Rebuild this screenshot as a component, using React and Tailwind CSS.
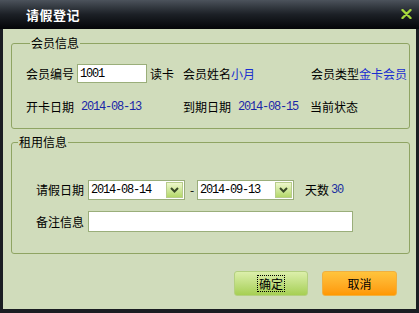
import React from 'react';

const cjk = { fontFamily: '"Noto Sans CJK SC", "Noto Sans", sans-serif' };

function DateCombo({ value }) {
  return (
    <div className="flex h-[20px] w-[97px] items-center border border-[#9aae7a] bg-white">
      <span className="flex-1 pl-[2px] font-['Liberation_Mono',monospace] text-[12px] tracking-[-1.2px] text-black">
        {value}
      </span>
      <span className="mr-[1px] flex h-[16px] w-[17px] items-center justify-center border border-[#b8cc8c] bg-gradient-to-b from-[#eef8cc] to-[#b4d868]">
        <svg width="9" height="6" viewBox="0 0 9 6">
          <path d="M1 1 L4.5 4.5 L8 1" stroke="#3a4a28" strokeWidth="2" fill="none" />
        </svg>
      </span>
    </div>
  );
}

export default function App() {
  return (
    <div className="flex h-[313px] w-[419px] flex-col bg-[#1a1d22] text-[12px] leading-[14px] text-black" style={cjk}>
      {/* title bar */}
      <div className="flex h-[29px] items-center justify-between bg-gradient-to-b from-[#4c535c] via-[#1c2026] to-[#050608] pl-[26px] pr-[7px]">
        <span className="text-[13px] font-bold tracking-[0.5px] text-white">请假登记</span>
        <svg width="11" height="10" viewBox="0 0 11 10" className="mb-[2px]">
          <path d="M1.5 1 L9.5 9 M9.5 1 L1.5 9" stroke="#a6d83c" strokeWidth="2.4" strokeLinecap="round" />
        </svg>
      </div>

      {/* body */}
      <div className="mb-[4px] ml-[3px] mr-[3px] flex flex-1 flex-col bg-[#d0dcbb] pl-[8px] pr-[6px]">
        <fieldset className="mt-[7px] rounded-[3px] border border-[#8fa463] pb-[14px] pl-[14px]">
          <legend className="ml-[4px] px-[1px] leading-[14px]">会员信息</legend>
          <div className="mt-[14px] flex h-[19px] items-center">
            <div className="flex w-[157px] items-center">
              <span>会员编号</span>
              <div className="ml-[3px] flex h-[19px] w-[70px] items-center border border-[#9aae7a] bg-white pl-[2px] font-['Liberation_Mono',monospace] text-[12px] tracking-[-1.2px]">
                1001
              </div>
              <span className="ml-[3px]">读卡</span>
            </div>
            <div className="w-[128px]">
              会员姓名<span className="text-[#1a2ed0]">小月</span>
            </div>
            <div>
              会员类型<span className="text-[#1a2ed0]">金卡会员</span>
            </div>
          </div>
          <div className="mt-[17px] flex h-[14px] items-center">
            <div className="flex w-[157px] items-center">
              <span>开卡日期</span>
              <span className="ml-[7px] font-['Liberation_Mono',monospace] text-[12px] tracking-[-1.2px] text-[#1a26a8]">2014-08-13</span>
            </div>
            <div className="flex w-[127px] items-center">
              <span>到期日期</span>
              <span className="ml-[7px] font-['Liberation_Mono',monospace] text-[12px] tracking-[-1.2px] text-[#1a26a8]">2014-08-15</span>
            </div>
            <div>当前状态</div>
          </div>
        </fieldset>

        <fieldset className="mt-[6px] rounded-[3px] border border-[#8fa463] pb-[21px] pl-[24px]">
          <legend className="ml-[-18px] px-[1px] leading-[14px]">租用信息</legend>
          <div className="mt-[31px] flex h-[20px] items-center">
            <span>请假日期</span>
            <div className="ml-[4px]">
              <DateCombo value="2014-08-14" />
            </div>
            <span className="ml-[5px] w-[7px]">-</span>
            <div>
              <DateCombo value="2014-09-13" />
            </div>
            <span className="ml-[11px]">天数</span>
            <span className="ml-[2px] font-['Liberation_Mono',monospace] text-[12px] tracking-[-1.2px] text-[#1a2ea0]">30</span>
          </div>
          <div className="mt-[11px] flex h-[21px] items-center">
            <span>备注信息</span>
            <div className="ml-[4px] h-[21px] w-[265px] border border-[#9aae7a] bg-white" />
          </div>
        </fieldset>

        <div className="mt-[17px] flex justify-end gap-[14px] pr-[13px]">
          <button className="flex h-[25px] w-[74px] items-center justify-center rounded-[3px] border border-[#b4d080] bg-gradient-to-b from-[#dcefaa] to-[#a6cf52]">
            <span className="border border-dotted border-black px-[1px] leading-[15px]">确定</span>
          </button>
          <button className="flex h-[25px] w-[75px] items-center justify-center rounded-[3px] border border-[#f0b040] bg-gradient-to-b from-[#ffc43c] to-[#ff9800]">
            取消
          </button>
        </div>
      </div>
    </div>
  );
}
